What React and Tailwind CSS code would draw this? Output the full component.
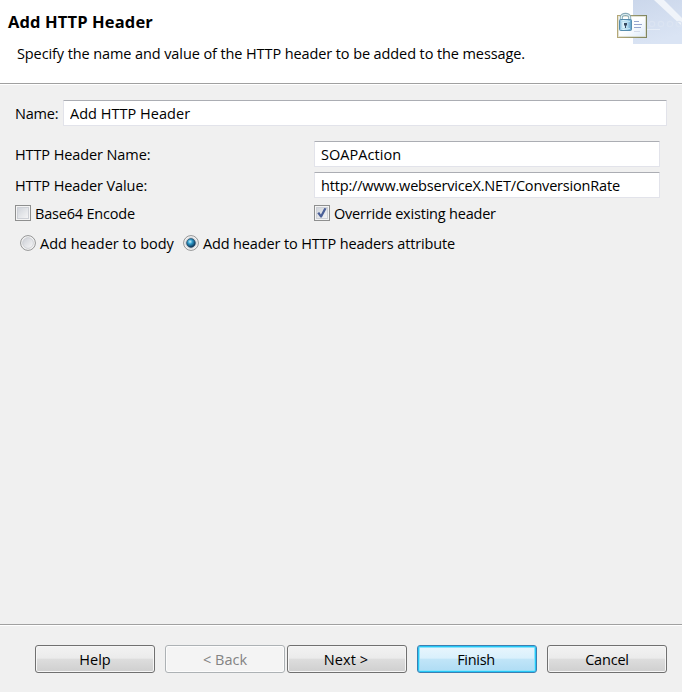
const fieldClass =
  "h-[26px] rounded-[1px] border border-[#e2e3ea] border-t-[#abadb3] bg-white pl-[6px] leading-[24px] text-black outline-none";

function Check({ checked, label, className }) {
  return (
    <label className={`flex h-4 items-center ${className}`}>
      <svg width="16" height="16" viewBox="0 0 16 16" className="mr-1 shrink-0">
        <defs>
          <linearGradient id="boxFill" x1="0" y1="0" x2="1" y2="1">
            <stop offset="0" stopColor="#cfd3da" />
            <stop offset="1" stopColor="#f6f6f6" />
          </linearGradient>
        </defs>
        <rect x=".5" y=".5" width="15" height="15" fill="#f4f4f4" stroke="#8e8f8f" />
        <rect x="2.5" y="2.5" width="11" height="11" fill="url(#boxFill)" stroke="#cdd0d6" />
        {checked && <path d="M3.3 8.2 5.2 7 6.9 9.4 10.3 3.1 12.6 3.6 7.8 12.6 6.4 12.6Z" fill="#4a5f97" />}
      </svg>
      <span className="whitespace-nowrap pt-0.5">{label}</span>
    </label>
  );
}

function Radio({ checked, label, className }) {
  return (
    <label className={`flex h-4 items-center ${className}`}>
      <svg width="16" height="16" viewBox="0 0 16 16" className="mr-1 shrink-0">
        <defs>
          <linearGradient id="radioFill" x1="0" y1="0" x2="1" y2="1">
            <stop offset="0" stopColor="#cbced5" />
            <stop offset="1" stopColor="#f8f8f8" />
          </linearGradient>
          <radialGradient id="radioDot" cx=".4" cy=".35" r=".65">
            <stop offset="0" stopColor="#c8f2fd" />
            <stop offset=".4" stopColor="#2d9aca" />
            <stop offset="1" stopColor="#0b2f50" />
          </radialGradient>
        </defs>
        <circle cx="8" cy="8" r="7.4" fill="#f5f5f5" stroke="#929394" />
        <circle cx="8" cy="8" r="5.4" fill="url(#radioFill)" stroke="#c9ccd1" strokeWidth=".8" />
        {checked && <circle cx="8" cy="8" r="4.4" fill="url(#radioDot)" stroke="#153a59" strokeWidth=".6" />}
      </svg>
      <span className="whitespace-nowrap pt-0.5">{label}</span>
    </label>
  );
}

const buttonBase = "flex h-7 w-[120px] items-center justify-center rounded-[3px] border pt-px";
const normal =
  "border-[#707070] bg-[linear-gradient(#f2f2f2_0%,#ebebeb_47%,#dddddd_50%,#cfcfcf_100%)] shadow-[inset_0_0_0_1px_#f6f6f6]";
const disabled = "border-[#adb2b5] bg-[#f4f4f4] text-[#838383] shadow-[inset_0_0_0_1px_#fcfcfc]";
const primary =
  "border-[#3c7fb1] bg-[linear-gradient(#e9f6fd_0%,#d9f0fc_47%,#c1e5f8_50%,#aedcf4_100%)] shadow-[inset_0_0_0_1px_#26c8f7,inset_0_0_0_2px_#8de2fb]";

function WizardIcon() {
  return (
    <svg width="80" height="44" viewBox="0 0 80 44" className="shrink-0">
      <defs>
        <linearGradient id="banner" x1="0" y1="0" x2="0.3" y2="1">
          <stop offset="0" stopColor="#cbd7eb" />
          <stop offset="1" stopColor="#dae4f4" />
        </linearGradient>
        <linearGradient id="card" x1="0" y1="0" x2="1" y2="1">
          <stop offset="0" stopColor="#fff" />
          <stop offset=".5" stopColor="#fdfeff" />
          <stop offset="1" stopColor="#dbe9fa" />
        </linearGradient>
        <linearGradient id="frame" x1="0" y1="0" x2="1" y2="0">
          <stop offset="0" stopColor="#b5a878" />
          <stop offset="1" stopColor="#7f855f" />
        </linearGradient>
        <linearGradient id="lockBody" x1="0" y1="0" x2="1" y2="0">
          <stop offset="0" stopColor="#7db4d8" />
          <stop offset=".3" stopColor="#e0f4fc" />
          <stop offset=".65" stopColor="#b2daf0" />
          <stop offset="1" stopColor="#5b9ac6" />
        </linearGradient>
      </defs>
      <rect x="31" width="49" height="44" fill="url(#banner)" />
      <path d="M52 0H62L80 18V26Z" fill="#f0f4fa" />
      <path d="M45 29.5H58" stroke="#e6edf7" />
      <g fill="none" stroke="#dbe4f2" strokeWidth="1.2">
        <circle cx="50" cy="24" r="2.7" />
        <circle cx="59" cy="24" r="2.7" />
        <circle cx="68" cy="24" r="2.7" />
        <circle cx="77" cy="24" r="2.7" />
      </g>
      <rect x="15.5" y="15.5" width="29" height="22" fill="url(#card)" stroke="url(#frame)" />
      <rect x="16.5" y="16.5" width="27" height="20" fill="none" stroke="#d3d3bd" strokeOpacity=".65" />
      <path d="M32 21.5h5M32 24.5h8M32 27.5h7" stroke="#97a6cf" />
      <path d="M32 31.5h6" stroke="#d5dceb" />
      <path d="M19.3 20V17.5C19.3 13.2 27.7 13.2 27.7 17.5V20" fill="none" stroke="#87a9b7" strokeWidth="3" />
      <path d="M19.3 20V17.5C19.3 13.5 27.7 13.5 27.7 17.5V20" fill="none" stroke="#e2f2f3" strokeWidth="1.2" />
      <rect x="17.5" y="19.5" width="12" height="11" rx="1" fill="url(#lockBody)" stroke="#568dae" />
      <path d="M19 21.5h9M19 28.5h9" stroke="#bce0f1" />
      <path d="M22 23h3v2l-1 1v2h-1v-2l-1-1Z" fill="#394960" />
    </svg>
  );
}

export default function App() {
  return (
    <div className="flex h-[692px] w-[682px] flex-col overflow-hidden bg-[#f0f0f0] font-['Open_Sans','Noto_Sans',sans-serif] text-[14.5px] leading-5 tracking-[-0.2px] text-black">
      <header className="flex h-[84px] justify-between border-b border-[#a0a0a0] bg-white">
        <div className="pl-2 pt-3">
          <h1 className="text-[16.5px] font-bold leading-5 tracking-[0.13px]">Add HTTP Header</h1>
          <p className="mt-3 whitespace-nowrap pl-[9px] tracking-[-0.1px]">
            Specify the name and value of the HTTP header to be added to the message.
          </p>
        </div>
        <WizardIcon />
      </header>
      <main className="flex h-[540px] flex-col border-t border-white px-[15px] pt-[15px]">
        <div className="flex h-[26px] items-center">
          <label htmlFor="name" className="w-12 pt-0.5">Name:</label>
          <input id="name" className={`${fieldClass} w-[604px] tracking-[0.03px]`} defaultValue="Add HTTP Header" />
        </div>
        <div className="mt-[15px] flex h-[26px] items-center">
          <label htmlFor="header" className="w-[299px] pt-0.5 tracking-[-0.1px]">HTTP Header Name:</label>
          <input id="header" className={`${fieldClass} w-[346px] tracking-[0.05px]`} defaultValue="SOAPAction" />
        </div>
        <div className="mt-[5px] flex h-[26px] items-center">
          <label htmlFor="value" className="w-[299px] pt-0.5 tracking-[-0.1px]">HTTP Header Value:</label>
          <input id="value" className={`${fieldClass} w-[346px] tracking-[-0.18px]`} defaultValue="http://www.webserviceX.NET/ConversionRate" />
        </div>
        <div className="mt-[7px] flex">
          <Check label="Base64 Encode" className="w-[299px]" />
          <Check checked label="Override existing header" className="" />
        </div>
        <div className="mt-[14px] flex pl-[5px]">
          <Radio label="Add header to body" className="w-[163px] tracking-[0px]" />
          <Radio checked label="Add header to HTTP headers attribute" className="tracking-[-0.14px]" />
        </div>
      </main>
      <footer className="flex h-[68px] border-t border-[#a0a0a0]">
        <div className="flex w-full border-t border-white pl-[35px] pt-[19px]">
          <button className={`${buttonBase} ${normal} mr-2.5 tracking-[0px]`}>Help</button>
          <button disabled className={`${buttonBase} ${disabled} mr-0.5 tracking-[0px]`}>&lt; Back</button>
          <button className={`${buttonBase} ${normal} mr-2.5 pr-0.5 tracking-[0.1px]`}>Next &gt;</button>
          <button className={`${buttonBase} ${primary} mr-2.5 pr-0.5 tracking-[-0.3px]`}>Finish</button>
          <button className={`${buttonBase} ${normal}`}>Cancel</button>
        </div>
      </footer>
    </div>
  );
}
